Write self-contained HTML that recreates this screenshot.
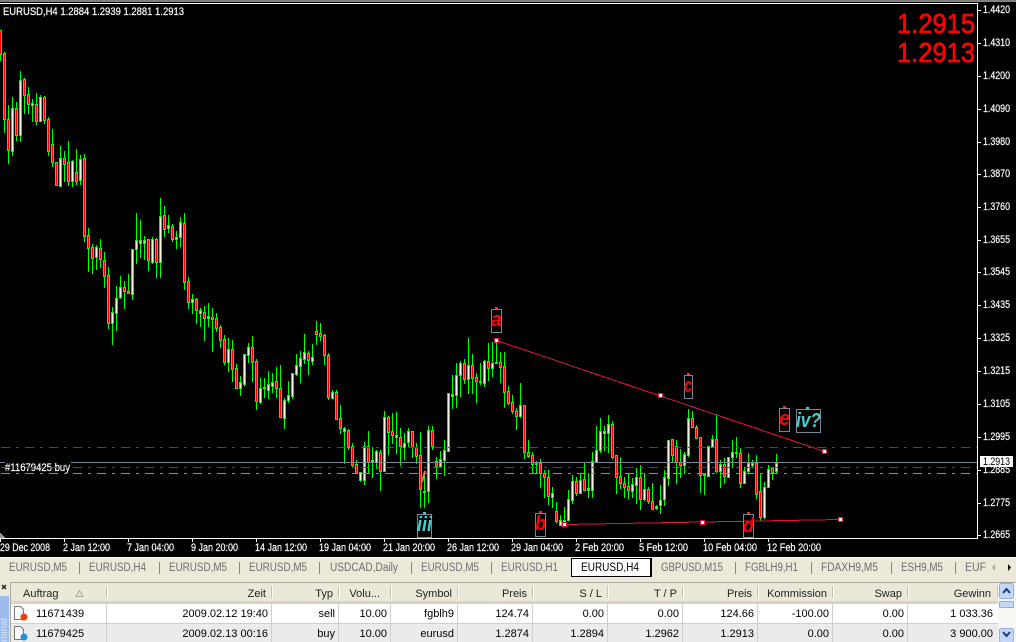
<!DOCTYPE html>
<html><head><meta charset="utf-8"><title>EURUSD,H4</title>
<style>
html,body{margin:0;padding:0;background:#000;width:1016px;height:642px;overflow:hidden}
svg{display:block}
text{font-family:"Liberation Sans",sans-serif}
.c text{fill:#fff;font-size:11px;stroke:#fff;stroke-width:.2}
.tab text{fill:#6e6e6e;font-size:11.5px}
.t text{fill:#000;font-size:11px;text-anchor:end}
.h text{fill:#222;font-size:11px;text-anchor:end}
.lb text{font-size:20px;font-style:italic;font-weight:bold}
</style></head><body>
<svg xmlns="http://www.w3.org/2000/svg" width="1016" height="642" viewBox="0 0 1016 642">
<rect width="1016" height="642" fill="#000"/>
<rect x="0" y="0" width="1016" height="2" fill="#808080"/>
<g shape-rendering="crispEdges">
<rect x="0" y="3" width="978" height="1" fill="#fff"/>
<rect x="977" y="3" width="1" height="536" fill="#fff"/>
<rect x="0" y="538" width="978" height="1" fill="#fff"/>
<path id="wk" fill="#00ff00"></path>
<path id="bd" fill="#00ff00"></path>
<path id="up" fill="#f5f5dc"></path>
<path id="dn" fill="#ff0000"></path>
<path d="M0 533h1v5h-1zM1 534h1v4h-1zM2 535h1v3h-1zM3 536h1v2h-1zM4 537h1v1h-1z" fill="#8a97a5"/>
<path fill="#fff" d="M978 10h3v1h-3zM978 43h3v1h-3zM978 76h3v1h-3zM978 109h3v1h-3zM978 142h3v1h-3zM978 174h3v1h-3zM978 207h3v1h-3zM978 240h3v1h-3zM978 272h3v1h-3zM978 305h3v1h-3zM978 338h3v1h-3zM978 371h3v1h-3zM978 404h3v1h-3zM978 437h3v1h-3zM978 470h3v1h-3zM978 503h3v1h-3zM978 535h3v1h-3z"/>
<path fill="#fff" d="M0 539h1v3h-1zM64 539h1v3h-1zM128 539h1v3h-1zM192 539h1v3h-1zM256 539h1v3h-1zM320 539h1v3h-1zM384 539h1v3h-1zM448 539h1v3h-1zM512 539h1v3h-1zM576 539h1v3h-1zM640 539h1v3h-1zM704 539h1v3h-1zM768 539h1v3h-1z"/>
<rect x="0" y="462" width="977" height="1" fill="#778899"/>
<rect x="5" y="462" width="66" height="1" fill="#000"/>
</g>
<g class="c"><text x="5" y="471" textLength="65" lengthAdjust="spacingAndGlyphs">#11679425 buy</text></g>
<g shape-rendering="crispEdges" fill="none" stroke-width="1">
<path d="M1 447.5H977" stroke="#ff0000" stroke-dasharray="9 6 3 6"/>
<path d="M1 467.5H977" stroke="#ff0000" stroke-dasharray="9 6 3 6"/>
<path d="M1 473.5H977" stroke="#32cd32" stroke-dasharray="9 6 3 6"/>
<path d="M496.5 340.5L824.5 451.5" stroke="#e6123c"/>
<path d="M564.5 524.5L840.5 519.5" stroke="#e6123c"/>
</g>
<g shape-rendering="crispEdges">
<path fill="#e6123c" d="M494 338h5v5h-5zM658 393h5v5h-5zM822 449h5v5h-5zM562 522h5v5h-5zM700 520h5v5h-5zM838 517h5v5h-5z"/>
<path fill="#fff" d="M495 339h3v3h-3zM659 394h3v3h-3zM823 450h3v3h-3zM563 523h3v3h-3zM701 521h3v3h-3zM839 518h3v3h-3z"/>
<path fill="none" stroke="#778899" d="M491.500 309.500h10v23h-10zM535.500 513.500h10v23h-10zM417.500 514.500h14v23h-14zM684.500 375.500h8v23h-8zM779.500 408.500h10v23h-10zM796.500 409.500h24v23h-24zM743.500 514.500h10v23h-10z"/>
<path fill="#ff2020" d="M495 307h3v2h-3zM539 511h3v2h-3zM687 373h3v2h-3zM783 406h3v2h-3zM747 512h3v2h-3z"/>
<path fill="#40d0d0" d="M423 512h3v2h-3zM806 407h3v2h-3z"/>
</g>
<path d="M425 471L422 482" stroke="#e08050" stroke-width="2" fill="none"/>
<g class="lb">
<text x="491" y="326" fill="#ff0000" textLength="11" lengthAdjust="spacingAndGlyphs">a</text>
<text x="535" y="530" fill="#ff0000" textLength="11" lengthAdjust="spacingAndGlyphs">b</text>
<text x="684" y="392" fill="#ff0000" textLength="8" lengthAdjust="spacingAndGlyphs">c</text>
<text x="743" y="532" fill="#ff0000" textLength="11" lengthAdjust="spacingAndGlyphs">d</text>
<text x="779" y="425" fill="#ff0000" textLength="11" lengthAdjust="spacingAndGlyphs">e</text>
<text x="796" y="427" fill="#40d0d0" textLength="25" lengthAdjust="spacingAndGlyphs">iv?</text>
<text x="417" y="531" fill="#40d0d0" textLength="15" lengthAdjust="spacingAndGlyphs">iii</text>
</g>
<g class="c">
<text x="3" y="15" textLength="181" lengthAdjust="spacingAndGlyphs">EURUSD,H4  1.2884 1.2939 1.2881 1.2913</text>
<text x="983" y="13" textLength="27" lengthAdjust="spacingAndGlyphs">1.4420</text>
<text x="983" y="46" textLength="27" lengthAdjust="spacingAndGlyphs">1.4310</text>
<text x="983" y="79" textLength="27" lengthAdjust="spacingAndGlyphs">1.4200</text>
<text x="983" y="112" textLength="27" lengthAdjust="spacingAndGlyphs">1.4090</text>
<text x="983" y="145" textLength="27" lengthAdjust="spacingAndGlyphs">1.3980</text>
<text x="983" y="177" textLength="27" lengthAdjust="spacingAndGlyphs">1.3870</text>
<text x="983" y="210" textLength="27" lengthAdjust="spacingAndGlyphs">1.3760</text>
<text x="983" y="243" textLength="27" lengthAdjust="spacingAndGlyphs">1.3655</text>
<text x="983" y="275" textLength="27" lengthAdjust="spacingAndGlyphs">1.3545</text>
<text x="983" y="308" textLength="27" lengthAdjust="spacingAndGlyphs">1.3435</text>
<text x="983" y="341" textLength="27" lengthAdjust="spacingAndGlyphs">1.3325</text>
<text x="983" y="374" textLength="27" lengthAdjust="spacingAndGlyphs">1.3215</text>
<text x="983" y="407" textLength="27" lengthAdjust="spacingAndGlyphs">1.3105</text>
<text x="983" y="440" textLength="27" lengthAdjust="spacingAndGlyphs">1.2995</text>
<text x="983" y="473" textLength="27" lengthAdjust="spacingAndGlyphs">1.2885</text>
<text x="983" y="506" textLength="27" lengthAdjust="spacingAndGlyphs">1.2775</text>
<text x="983" y="538" textLength="27" lengthAdjust="spacingAndGlyphs">1.2665</text>
</g>
<rect x="980" y="456" width="33" height="11" fill="#fff" shape-rendering="crispEdges"/>
<text x="983" y="465" font-size="11" fill="#000" textLength="27" lengthAdjust="spacingAndGlyphs">1.2913</text>
<g class="c">
<text x="0" y="551" textLength="50" lengthAdjust="spacingAndGlyphs">29 Dec 2008</text>
<text x="63" y="551" textLength="47" lengthAdjust="spacingAndGlyphs">2 Jan 12:00</text>
<text x="127" y="551" textLength="47" lengthAdjust="spacingAndGlyphs">7 Jan 04:00</text>
<text x="191" y="551" textLength="47" lengthAdjust="spacingAndGlyphs">9 Jan 20:00</text>
<text x="255" y="551" textLength="52" lengthAdjust="spacingAndGlyphs">14 Jan 12:00</text>
<text x="319" y="551" textLength="52" lengthAdjust="spacingAndGlyphs">19 Jan 04:00</text>
<text x="383" y="551" textLength="52" lengthAdjust="spacingAndGlyphs">21 Jan 20:00</text>
<text x="447" y="551" textLength="52" lengthAdjust="spacingAndGlyphs">26 Jan 12:00</text>
<text x="511" y="551" textLength="52" lengthAdjust="spacingAndGlyphs">29 Jan 04:00</text>
<text x="575" y="551" textLength="49" lengthAdjust="spacingAndGlyphs">2 Feb 20:00</text>
<text x="639" y="551" textLength="49" lengthAdjust="spacingAndGlyphs">5 Feb 12:00</text>
<text x="703" y="551" textLength="54" lengthAdjust="spacingAndGlyphs">10 Feb 04:00</text>
<text x="767" y="551" textLength="54" lengthAdjust="spacingAndGlyphs">12 Feb 20:00</text>
</g>
<text x="897" y="33" font-size="28" fill="#ff0000" stroke="#ff0000" stroke-width=".7" textLength="78" lengthAdjust="spacingAndGlyphs">1.2915</text>
<text x="897" y="62" font-size="28" fill="#ff0000" stroke="#ff0000" stroke-width=".7" textLength="78" lengthAdjust="spacingAndGlyphs">1.2913</text>

<g shape-rendering="crispEdges">
<rect x="0" y="557" width="1016" height="85" fill="#ece9d8"/>
<rect x="0" y="557" width="1016" height="1" fill="#fff"/>
<rect x="571" y="558" width="80" height="19" fill="#fff"/>
<path fill="#000" d="M571 558h80v1h-80zM571 558h1v19h-1zM650 558h2v19h-2zM571 576h81v1h-81z"/>
<path fill="#8a8a80" d="M79 562h1v12h-1zM159 562h1v12h-1zM239 562h1v12h-1zM319 562h1v12h-1zM411 562h1v12h-1zM491 562h1v12h-1zM735 562h1v12h-1zM811 562h1v12h-1zM891 562h1v12h-1zM955 562h1v12h-1z"/>
<path fill="#aca899" d="M10 582h1006v1h-1006zM10 582h1v60h-1z"/>
<rect x="0" y="596" width="9" height="46" fill="#9dbcee"/>
<rect x="11" y="583" width="987" height="18" fill="#ebe8da"/>
<rect x="11" y="601" width="987" height="3" fill="#d8d5c5"/>
<rect x="11" y="604" width="987" height="19" fill="#fff"/>
<rect x="11" y="623" width="987" height="1" fill="#cfcfcf"/>
<rect x="11" y="624" width="987" height="18" fill="#ebebeb"/>
<path fill="#cfcfcf" d="M106 604h1v38h-1zM271 604h1v38h-1zM338 604h1v38h-1zM390 604h1v38h-1zM457 604h1v38h-1zM532 604h1v38h-1zM607 604h1v38h-1zM682 604h1v38h-1zM757 604h1v38h-1zM832 604h1v38h-1zM907 604h1v38h-1z"/>
<path fill="#c8c5b2" d="M106 586h1v12h-1zM271 586h1v12h-1zM338 586h1v12h-1zM390 586h1v12h-1zM457 586h1v12h-1zM532 586h1v12h-1zM607 586h1v12h-1zM682 586h1v12h-1zM757 586h1v12h-1zM832 586h1v12h-1zM907 586h1v12h-1zM997 586h1v12h-1z"/>
<path fill="#fff" d="M107 586h1v12h-1zM272 586h1v12h-1zM339 586h1v12h-1zM391 586h1v12h-1zM458 586h1v12h-1zM533 586h1v12h-1zM608 586h1v12h-1zM683 586h1v12h-1zM758 586h1v12h-1zM833 586h1v12h-1zM908 586h1v12h-1z"/>
<rect x="998" y="583" width="18" height="59" fill="#f7f6f0"/>
<rect x="999.500" y="583.500" width="14" height="15" rx="2" fill="#c5d6fb" stroke="#93abe0"/>
<rect x="999.500" y="601.500" width="14" height="6" rx="1" fill="#c5d6fb" stroke="#93abe0"/>
<rect x="999.500" y="628.500" width="14" height="14" rx="2" fill="#c5d6fb" stroke="#93abe0"/>
</g>
<path d="M1003 593l3.500-4 3.500 4M1003 632l3.500 4 3.500-4" fill="none" stroke="#1c3a78" stroke-width="2"/>
<path d="M2 585l4 4M6 585l-4 4" stroke="#222" stroke-width="1.500" fill="none"/>
<text x="7" y="618" font-size="10" fill="#dbe6fb" text-anchor="end" transform="rotate(-90 7 618)">Terminal</text>
<g class="tab">
<text x="9" y="571" textLength="58" lengthAdjust="spacingAndGlyphs">EURUSD,M5</text>
<text x="89" y="571" textLength="57" lengthAdjust="spacingAndGlyphs">EURUSD,H4</text>
<text x="169" y="571" textLength="58" lengthAdjust="spacingAndGlyphs">EURUSD,M5</text>
<text x="249" y="571" textLength="58" lengthAdjust="spacingAndGlyphs">EURUSD,M5</text>
<text x="330" y="571" textLength="68" lengthAdjust="spacingAndGlyphs">USDCAD,Daily</text>
<text x="421" y="571" textLength="58" lengthAdjust="spacingAndGlyphs">EURUSD,M5</text>
<text x="501" y="571" textLength="57" lengthAdjust="spacingAndGlyphs">EURUSD,H1</text>
<text x="581" y="571" textLength="58" lengthAdjust="spacingAndGlyphs" style="fill:#000">EURUSD,H4</text>
<text x="661" y="571" textLength="62" lengthAdjust="spacingAndGlyphs">GBPUSD,M15</text>
<text x="745" y="571" textLength="53" lengthAdjust="spacingAndGlyphs">FGBLH9,H1</text>
<text x="821" y="571" textLength="57" lengthAdjust="spacingAndGlyphs">FDAXH9,M5</text>
<text x="901" y="571" textLength="42" lengthAdjust="spacingAndGlyphs">ESH9,M5</text>
<text x="965" y="571" textLength="21" lengthAdjust="spacingAndGlyphs">EUF</text>
</g>
<path d="M995 564v7l-3-3.500z" fill="#aaa"/><path d="M1008 564v7l3-3.500z" fill="#000"/>
<g class="h">
<text x="23" y="597" style="text-anchor:start">Auftrag</text>
<text x="266" y="597">Zeit</text><text x="333" y="597">Typ</text><text x="380" y="597">Volu...</text><text x="452" y="597">Symbol</text><text x="527" y="597">Preis</text><text x="602" y="597">S / L</text><text x="677" y="597">T / P</text><text x="752" y="597">Preis</text><text x="827" y="597">Kommission</text><text x="902" y="597">Swap</text><text x="991" y="597">Gewinn</text>
</g>
<path d="M76 596.500l3.500-6 3.500 6z" fill="none" stroke="#aaa69a"/>
<g class="t">
<text x="36" y="617" style="text-anchor:start">11671439</text>
<text x="268" y="617">2009.02.12 19:40</text><text x="335" y="617">sell</text><text x="387" y="617">10.00</text><text x="454" y="617">fgblh9</text><text x="529" y="617">124.74</text><text x="604" y="617">0.00</text><text x="679" y="617">0.00</text><text x="754" y="617">124.66</text><text x="829" y="617">-100.00</text><text x="904" y="617">0.00</text><text x="993" y="617">1 033.36</text>
<text x="36" y="637" style="text-anchor:start">11679425</text>
<text x="268" y="637">2009.02.13 00:16</text><text x="335" y="637">buy</text><text x="387" y="637">10.00</text><text x="454" y="637">eurusd</text><text x="529" y="637">1.2874</text><text x="604" y="637">1.2894</text><text x="679" y="637">1.2962</text><text x="754" y="637">1.2913</text><text x="829" y="637">0.00</text><text x="904" y="637">0.00</text><text x="993" y="637">3 900.00</text>
</g>
<path d="M14.500 606.500h6l3 3v10h-9z" fill="#fff" stroke="#777"/>
<circle cx="24" cy="617" r="3.500" fill="#e8400f"/>
<path d="M14.500 626.500h6l3 3v10h-9z" fill="#fff" stroke="#777"/>
<circle cx="24" cy="637" r="3.500" fill="#1f8fe0"/>
<script>
var D="30 30 54 60 0,52 53 119 132 0,105 119 150 163 0,97 108 151 155 1,102 108 135 140 0,71 80 135 141 1,78 79 95 113 0,87 94 104 113 0,99 103 105 121 1,93 104 121 124 0,95 97 121 121 1,96 97 120 123 0,117 119 151 155 0,129 144 162 166 0,162 162 185 185 0,146 158 186 186 1,151 158 164 181 0,141 162 181 185 0,160 161 181 186 1,149 172 181 184 0,155 159 180 184 1,154 158 236 241 0,228 235 248 271 0,244 247 258 273 0,245 247 257 269 1,239 248 259 267 0,252 260 276 287 0,267 275 323 328 0,307 312 323 344 1,286 298 313 330 1,276 287 297 298 1,281 287 291 308 0,274 291 293 293 0,249 249 294 299 1,213 240 249 263 1,220 240 243 257 1,236 240 243 259 1,239 239 260 270 0,237 239 262 263 1,238 239 262 277 0,198 216 262 277 1,206 215 229 236 0,215 225 228 232 1,224 226 239 241 0,231 237 239 248 1,217 222 237 246 1,213 223 282 289 0,277 281 302 308 0,294 299 302 313 1,298 299 310 323 0,308 310 313 326 1,306 312 318 340 0,303 316 318 326 1,308 317 319 351 0,313 318 328 331 0,325 327 340 347 0,335 339 362 364 0,338 349 362 371 1,340 349 369 381 0,364 368 388 388 0,376 382 388 395 1,354 354 384 385 1,343 347 355 362 1,336 347 362 381 0,359 361 401 409 0,378 388 402 403 1,378 387 388 397 1,371 384 390 398 1,373 382 386 392 1,367 381 388 397 0,365 388 417 417 0,398 400 418 428 1,381 395 400 402 1,373 373 396 398 1,354 365 374 375 1,351 358 366 382 1,334 352 359 363 1,351 353 360 374 0,344 357 361 364 1,321 331 334 344 0,323 333 336 340 0,334 335 355 364 0,353 355 397 399 0,390 392 398 398 1,390 392 419 419 0,405 418 428 433 0,427 428 431 463 1,429 430 447 449 0,443 446 465 466 0,460 464 473 473 0,472 472 480 481 1,442 446 480 484 1,431 446 462 472 0,447 460 462 477 1,450 451 462 468 1,450 452 471 490 0,411 417 471 471 1,416 417 432 454 0,413 431 435 443 0,412 435 437 453 1,428 437 446 465 0,433 443 447 459 1,428 431 442 446 1,431 431 447 457 0,443 447 456 463 0,432 455 489 507 0,471 491 492 507 1,426 430 491 502 1,426 430 446 449 0,457 461 466 478 0,451 459 466 467 1,440 450 460 475 1,393 393 451 451 1,375 394 396 408 1,363 375 395 407 1,361 363 375 396 1,359 363 379 383 0,338 365 379 393 1,354 365 378 393 0,373 377 381 402 0,363 381 382 384 1,360 361 383 386 1,343 361 368 380 0,342 363 368 376 1,342 362 363 362 1,352 362 367 382 0,352 366 392 407 0,386 391 403 404 0,395 402 411 413 0,408 411 416 429 0,383 405 416 417 1,405 405 452 458 0,440 452 456 457 0,452 455 464 472 0,461 463 464 472 1,459 463 473 487 0,470 473 477 497 0,470 477 496 504 0,487 493 497 507 1,502 511 521 522 0,515 520 525 525 1,507 520 523 523 1,490 499 520 520 1,475 481 500 503 1,477 481 493 495 0,473 480 493 493 1,462 479 490 490 0,473 488 490 497 1,452 461 490 497 1,426 450 462 462 1,418 431 450 452 1,426 431 433 450 1,415 424 433 452 1,421 424 457 458 0,455 455 477 493 0,457 476 483 488 0,477 483 487 497 0,473 486 490 498 0,478 484 491 497 1,468 477 485 503 1,465 477 499 509 0,473 489 499 500 1,487 489 501 503 0,483 501 509 509 0,505 506 508 509 1,485 500 505 513 1,470 477 499 505 1,440 440 478 485 1,439 439 455 462 0,440 446 462 483 0,449 462 465 477 0,452 454 465 473 1,409 418 455 456 1,411 418 427 427 0,425 427 438 438 0,437 437 475 492 0,473 474 475 494 1,446 446 476 476 1,435 439 447 447 1,414 439 471 472 0,460 464 471 487 1,458 464 476 483 0,457 457 477 477 1,440 452 457 467 1,437 452 453 457 1,448 453 483 487 0,467 471 483 483 1,453 463 471 472 1,460 463 465 467 1,455 463 494 498 0,473 491 517 520 0,482 487 517 518 1,465 469 487 487 1,467 468 472 479 0,454 463 471 472 1";
var w="",b="",u="",d="";
D.split(",").forEach(function(s,i){
  var a=s.split(" ").map(Number),x=4*i,h=Math.min(a[0],a[1]),t=a[1],e=a[2],l=Math.max(a[3],a[2]);
  w+="M"+x+" "+h+"h1V"+(l+1)+"h-1z";
  b+="M"+(x-1)+" "+t+"h3V"+(e+1)+"h-3z";
  if(e-t>=2){var p="M"+x+" "+(t+1)+"h1V"+e+"h-1z";if(a[4])u+=p;else d+=p;}
});
document.getElementById("wk").setAttribute("d",w);
document.getElementById("bd").setAttribute("d",b);
document.getElementById("up").setAttribute("d",u);
document.getElementById("dn").setAttribute("d",d);
</script>
</svg>
</body></html>
